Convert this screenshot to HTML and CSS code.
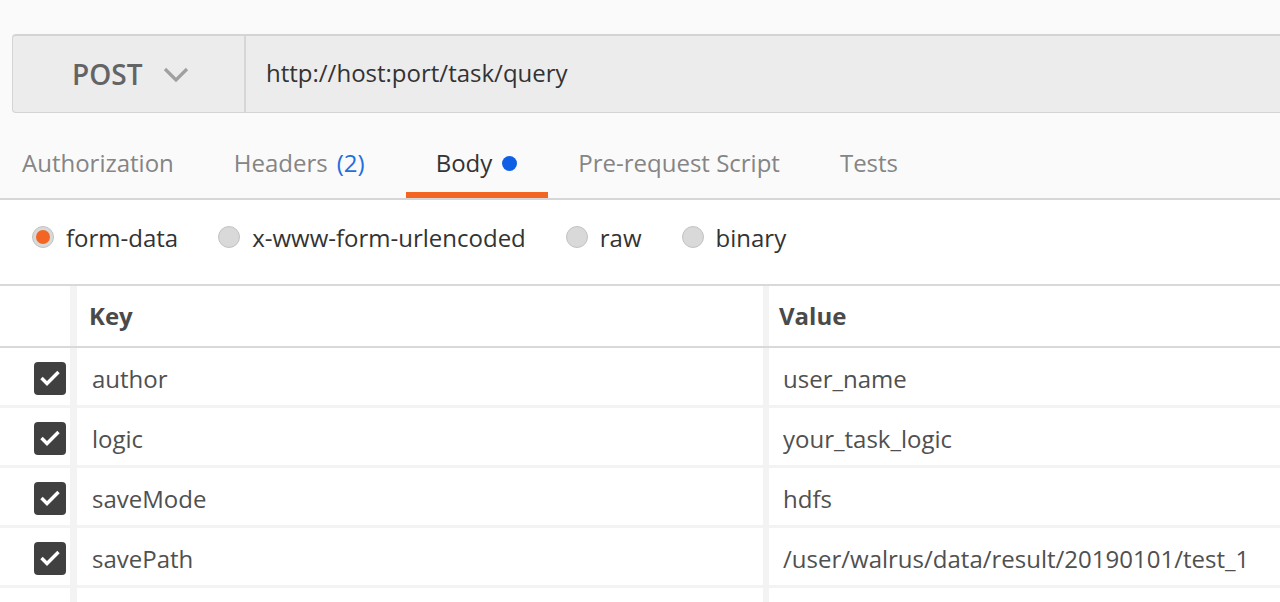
FILE: index.html
```html
<!DOCTYPE html>
<html>
<head>
<meta charset="utf-8">
<link rel="stylesheet" href="styles.css">
</head>
<body>
<div class="page">
  <div class="urlbar">
    <div class="method">
      <span class="method-name">POST</span>
      <svg class="chev" width="26" height="16" viewBox="0 0 26 16"><path d="M2 2 L13 13 L24 2" fill="none" stroke="#a0a0a0" stroke-width="3.2"/></svg>
    </div>
    <div class="url">http://host:port/task/query</div>
  </div>

  <div class="tabs">
    <div class="tab first">Authorization</div>
    <div class="tab headers">Headers <span class="count">(2)</span></div>
    <div class="tab active">Body <span class="dot"></span></div>
    <div class="tab">Pre-request Script</div>
    <div class="tab">Tests</div>
  </div>

  <div class="bodytypes">
    <label class="opt"><span class="radio on"></span>form-data</label>
    <label class="opt"><span class="radio"></span>x-www-form-urlencoded</label>
    <label class="opt"><span class="radio"></span>raw</label>
    <label class="opt"><span class="radio"></span>binary</label>
  </div>

  <div class="table">
    <div class="row head">
      <div class="cell check"></div>
      <div class="cell key">Key</div>
      <div class="cell val">Value</div>
    </div>
    <div class="row">
      <div class="cell check"><span class="cb"><svg width="22" height="18" viewBox="0 0 22 18"><path d="M2.5 9 L8 14.5 L19.5 3" fill="none" stroke="#fff" stroke-width="3.4"/></svg></span></div>
      <div class="cell key">author</div>
      <div class="cell val">user_name</div>
    </div>
    <div class="row">
      <div class="cell check"><span class="cb"><svg width="22" height="18" viewBox="0 0 22 18"><path d="M2.5 9 L8 14.5 L19.5 3" fill="none" stroke="#fff" stroke-width="3.4"/></svg></span></div>
      <div class="cell key">logic</div>
      <div class="cell val">your_task_logic</div>
    </div>
    <div class="row">
      <div class="cell check"><span class="cb"><svg width="22" height="18" viewBox="0 0 22 18"><path d="M2.5 9 L8 14.5 L19.5 3" fill="none" stroke="#fff" stroke-width="3.4"/></svg></span></div>
      <div class="cell key">saveMode</div>
      <div class="cell val">hdfs</div>
    </div>
    <div class="row">
      <div class="cell check"><span class="cb"><svg width="22" height="18" viewBox="0 0 22 18"><path d="M2.5 9 L8 14.5 L19.5 3" fill="none" stroke="#fff" stroke-width="3.4"/></svg></span></div>
      <div class="cell key">savePath</div>
      <div class="cell val">/user/walrus/data/result/20190101/test_1</div>
    </div>
    <div class="row">
      <div class="cell check"></div>
      <div class="cell key"></div>
      <div class="cell val"></div>
    </div>
  </div>
</div>
</body>
</html>
```

FILE: styles.css
```css
* { box-sizing: border-box; }
html, body { margin: 0; padding: 0; }
body {
  background: #fafafa;
  font-family: "Open Sans", "Liberation Sans", sans-serif;
  color: #333;
  overflow: hidden;
  height: 602px;
}
.page { padding-top: 34px; }

.urlbar {
  margin-left: 12px;
  height: 79px;
  display: flex;
  background: #ececec;
  border: 1px solid #d4d4d4;
  border-top-width: 2px;
  border-right: none;
  border-radius: 4px 0 0 4px;
}
.method {
  width: 233px;
  display: flex;
  align-items: center;
  padding-left: 59px;
  border-right: 2px solid #d6d6d6;
}
.method-name {
  font-size: 28px;
  font-weight: 600;
  color: #646464;
}
.chev { margin-left: 21px; margin-top: 1px; }
.url {
  display: flex;
  align-items: center;
  padding-left: 20px;
  padding-bottom: 4px;
  font-size: 24px;
  color: #333;
}

.tabs {
  display: flex;
  height: 87px;
  border-bottom: 2px solid #d6d6d6;
}
.tab {
  height: 85px;
  padding: 20px 30px 0;
  display: flex;
  align-items: center;
  font-size: 24px;
  color: #858585;
  border-bottom: 6px solid transparent;
}
.tab.first { padding-left: 22px; }
.tab.headers { padding-right: 41px; }
.tab.active { color: #333; border-bottom-color: #f26522; padding-right: 31px; }
.count { color: #1f6fe0; margin-left: 9px; }
.dot {
  width: 15px; height: 15px;
  border-radius: 50%;
  background: #0f5fe6;
  margin-left: 10px;
  margin-top: 2px;
}

.bodytypes {
  background: #fff;
  height: 86px;
  display: flex;
  align-items: center;
  padding: 0 0 10px 32px;
  gap: 40px;
  border-bottom: 2px solid #d9d9d9;
}
.opt {
  display: flex;
  align-items: center;
  font-size: 24px;
  color: #333;
}
.radio {
  width: 22px; height: 22px;
  border-radius: 50%;
  background: #d9d9d9;
  border: 1px solid #c2c2c2;
  margin-right: 12px;
  display: flex;
  align-items: center;
  justify-content: center;
}
.radio.on::after {
  content: "";
  width: 14px; height: 14px;
  border-radius: 50%;
  background: #f26522;
}

.table { background: #fff; }
.row {
  display: flex;
  height: 60px;
  border-bottom: 3px solid #f3f3f3;
}
.row.head {
  height: 62px;
  border-bottom: 2px solid #d9d9d9;
  font-weight: 700;
  color: #4a4a4a;
}
.cell {
  display: flex;
  align-items: center;
  font-size: 24px;
  color: #505050;
  padding-top: 3px;
}
.head .cell { color: #4a4a4a; padding-top: 0; padding-bottom: 1px; }
.check {
  width: 70px;
  justify-content: flex-end;
  padding-right: 4px;
}
.key {
  width: 693px;
  border-left: 7px solid #f3f3f3;
  padding-left: 15px;
}
.head .key { padding-left: 12px; }
.val {
  flex: 1;
  border-left: 6px solid #f3f3f3;
  padding-left: 14px;
}
.head .val { padding-left: 10px; }
.cb {
  width: 32px; height: 33px;
  border-radius: 4px;
  background: #404040;
  display: flex;
  align-items: center;
  justify-content: center;
}
```
